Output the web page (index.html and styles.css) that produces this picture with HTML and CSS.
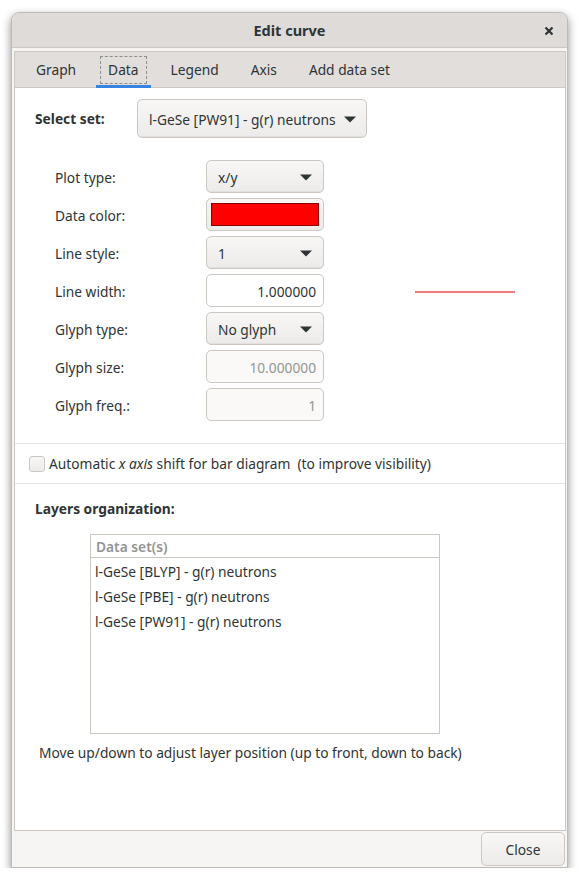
FILE: index.html
```html
<!DOCTYPE html>
<html>
<head>
<meta charset="utf-8">
<link rel="stylesheet" href="styles.css">
</head>
<body>
<div class="window">
  <div class="titlebar">
    <span class="title">Edit curve</span>
    <span class="close"><svg width="10" height="10" viewBox="0 0 10 10"><path d="M1.5 1.5 L8.5 8.5 M8.5 1.5 L1.5 8.5" stroke="#2e3436" stroke-width="2.2" stroke-linecap="butt"/></svg></span>
  </div>
  <div class="body">
    <div class="notebook">
      <div class="tabs">
        <div class="tab">Graph</div>
        <div class="tab active"><span class="focus">Data</span></div>
        <div class="tab">Legend</div>
        <div class="tab">Axis</div>
        <div class="tab">Add data set</div>
      </div>
      <div class="page">
        <div class="select-row">
          <span class="select-label">Select set:</span>
          <div class="combo combo-wide"><span>l-GeSe [PW91] - g(r) neutrons</span><svg class="arrow" width="14" height="8" viewBox="0 0 14 8"><path d="M1 1.5 H13 L7 7.5 Z" fill="#2e3436"/></svg></div>
        </div>
        <div class="form">
          <span class="lbl">Plot type:</span>
          <div class="combo"><span>x/y</span><svg class="arrow" width="14" height="8" viewBox="0 0 14 8"><path d="M1 1.5 H13 L7 7.5 Z" fill="#2e3436"/></svg></div>
          <span class="lbl">Data color:</span>
          <div class="color-btn"><span class="swatch"></span></div>
          <span class="lbl">Line style:</span>
          <div class="combo"><span>1</span><svg class="arrow" width="14" height="8" viewBox="0 0 14 8"><path d="M1 1.5 H13 L7 7.5 Z" fill="#2e3436"/></svg></div>
          <span class="lbl">Line width:</span>
          <div class="entry">1.000000</div>
          <div class="preview"></div>
          <span class="lbl">Glyph type:</span>
          <div class="combo"><span>No glyph</span><svg class="arrow" width="14" height="8" viewBox="0 0 14 8"><path d="M1 1.5 H13 L7 7.5 Z" fill="#2e3436"/></svg></div>
          <span class="lbl">Glyph size:</span>
          <div class="entry disabled">10.000000</div>
          <span class="lbl">Glyph freq.:</span>
          <div class="entry disabled">1</div>
        </div>
        <div class="sep"></div>
        <div class="check-row">
          <span class="checkbox"></span>
          <span>Automatic <i>x axis</i> shift for bar diagram&nbsp; (to improve visibility)</span>
        </div>
        <div class="sep"></div>
        <div class="layers-title">Layers organization:</div>
        <div class="listbox">
          <div class="list-head">Data set(s)</div>
          <div class="item">l-GeSe [BLYP] - g(r) neutrons</div>
          <div class="item">l-GeSe [PBE] - g(r) neutrons</div>
          <div class="item">l-GeSe [PW91] - g(r) neutrons</div>
        </div>
        <div class="hint">Move up/down to adjust layer position (up to front, down to back)</div>
      </div>
    </div>
    <div class="actions"><div class="btn">Close</div></div>
  </div>
</div>
</body>
</html>
```
FILE: styles.css
```css
* { box-sizing: border-box; }
html, body { margin: 0; padding: 0; background: #ffffff; }
body {
  font-family: "Noto Sans", "DejaVu Sans", sans-serif;
  font-size: 13.75px;
  color: #2e3436;
}
.window {
  margin: 12px 0 0 11px;
  width: 557px;
  height: 856px;
  border: 1px solid #c0bab4;
  border-radius: 8px 8px 0 0;
  background: #f6f5f4;
  display: flex;
  flex-direction: column;
  box-shadow: 0 4px 10px rgba(0,0,0,0.45);
}
.titlebar {
  height: 35px;
  flex: none;
  background: #dedbd8;
  border-bottom: 1px solid #cdc7c2;
  border-radius: 7px 7px 0 0;
  display: flex;
  align-items: center;
  justify-content: center;
  position: relative;
}
.title { font-weight: bold; font-size: 14.5px; }
.close {
  position: absolute;
  right: 13px;
  top: 13px;
  width: 10px;
  height: 10px;
  display: flex;
}
.body {
  flex: 1;
  display: flex;
  flex-direction: column;
  padding: 3px 1px 0 2px;
}
.notebook {
  height: 780px;
  flex: none;
  border: 1px solid #cdc7c2;
  display: flex;
  flex-direction: column;
  background: #ffffff;
}
.tabs {
  height: 36px;
  flex: none;
  background: #e1dedb;
  box-shadow: inset 0 -1px #cdc7c2;
  display: flex;
  padding-left: 9px;
  gap: 8px;
}
.tab {
  height: 36px;
  padding: 0 12px;
  display: flex;
  align-items: center;
  border-bottom: 3px solid transparent;
  padding-top: 2px;
}
.tab.active {
  border-bottom-color: #3584e4;
  padding: 2px 4px 0;
}
.focus {
  border: 1px dashed #8b8e8f;
  padding: 0 7px;
  height: 28px;
  display: flex;
  align-items: center;
}
.page { flex: 1; display: flex; flex-direction: column; }
.select-row {
  margin-top: 11px;
  padding-left: 20px;
  display: flex;
  align-items: center;
}
.select-label { width: 102px; font-weight: bold; }
.combo {
  height: 33px;
  border: 1px solid #cdc7c2;
  border-radius: 5px;
  background: linear-gradient(#f8f7f6, #edebe9);
  box-shadow: inset 0 -1px rgba(0,0,0,0.04);
  display: flex;
  align-items: center;
  justify-content: space-between;
  padding: 1px 10px 0 11px;
}
.combo-wide { height: 39px; width: 230px; padding-right: 9px; }
.arrow { flex: none; }
.form {
  margin-top: 22px;
  padding-left: 40px;
  display: grid;
  grid-template-columns: 151px 118px 91px 100px;
  grid-auto-rows: 33px;
  row-gap: 5px;
  align-items: center;
}
.form .lbl { grid-column: 1; padding-top: 2px; }
.form .combo, .form .entry, .form .color-btn { grid-column: 2; }
.preview {
  grid-column: 4;
  height: 2px;
  background: #f27b7b;
  margin-top: 2px;
}
.color-btn {
  height: 33px;
  border: 1px solid #cdc7c2;
  border-radius: 5px;
  background: linear-gradient(#f8f7f6, #edebe9);
  padding: 4px;
  display: flex;
}
.swatch {
  flex: 1;
  background: #ff0000;
  border: 1px solid #8b0000;
}
.entry {
  height: 33px;
  border: 1px solid #cdc7c2;
  border-radius: 5px;
  background: #ffffff;
  display: flex;
  align-items: center;
  justify-content: flex-end;
  padding: 1px 7px 0 0;
}
.entry.disabled { background: #faf9f8; color: #929595; }
.sep { height: 1px; background: #e6e3e0; flex: none; }
.form + .sep { margin-top: 22px; }
.check-row {
  height: 39px;
  display: flex;
  align-items: center;
  padding-left: 14px;
  gap: 4px;
}
.checkbox {
  width: 16px;
  height: 16px;
  border: 1px solid #cdc7c2;
  border-radius: 3px;
  background: linear-gradient(#f8f7f6, #edebe9);
}
.layers-title {
  margin-top: 15px;
  padding-left: 20px;
  font-weight: bold;
  line-height: 20px;
}
.listbox {
  margin: 15px 0 0 75px;
  width: 350px;
  height: 200px;
  border: 1px solid #cdc7c2;
  background: #ffffff;
}
.list-head {
  height: 23px;
  border-bottom: 1px solid #cdc7c2;
  color: #929595;
  font-weight: 600;
  padding-left: 5px;
  display: flex;
  align-items: center;
}
.item {
  height: 25px;
  display: flex;
  align-items: center;
  padding: 2px 0 0 4px;
}
.hint {
  margin-top: 9px;
  padding-left: 24px;
  line-height: 20px;
}
.actions {
  flex: 1;
  display: flex;
  justify-content: flex-end;
  align-items: flex-start;
  padding: 1px 1px 0 0;
}
.btn {
  width: 84px;
  height: 34px;
  border: 1px solid #cdc7c2;
  border-radius: 5px;
  background: linear-gradient(#f8f7f6, #edebe9);
  display: flex;
  align-items: center;
  justify-content: center;
}
```
